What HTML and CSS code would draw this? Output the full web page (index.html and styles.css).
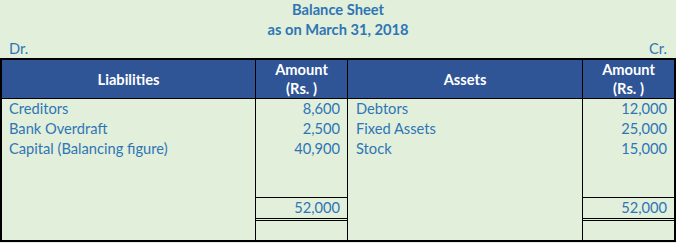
FILE: index.html
```html
<!DOCTYPE html>
<html lang="en">
<head>
<meta charset="utf-8">
<title>Balance Sheet</title>
<link rel="stylesheet" href="styles.css">
</head>
<body>
<div class="page">
  <div class="title">Balance Sheet</div>
  <div class="title">as on March 31, 2018</div>
  <div class="side-row"><span>Dr.</span><span>Cr.</span></div>
  <div class="sheet">
    <div class="hcell">Liabilities</div>
    <div class="hcell">Amount<br>(Rs. )</div>
    <div class="hcell">Assets</div>
    <div class="hcell last">Amount<br>(Rs. )</div>

    <div class="desc">
      <div class="line">Creditors</div>
      <div class="line">Bank Overdraft</div>
      <div class="line">Capital (Balancing figure)</div>
    </div>
    <div class="amt">
      <div class="entries">
        <div class="line">8,600</div>
        <div class="line">2,500</div>
        <div class="line">40,900</div>
      </div>
      <div class="total line">52,000</div>
      <div class="tail"></div>
    </div>
    <div class="desc assets">
      <div class="line">Debtors</div>
      <div class="line">Fixed Assets</div>
      <div class="line">Stock</div>
    </div>
    <div class="amt last">
      <div class="entries">
        <div class="line">12,000</div>
        <div class="line">25,000</div>
        <div class="line">15,000</div>
      </div>
      <div class="total line">52,000</div>
      <div class="tail"></div>
    </div>
  </div>
</div>
</body>
</html>
```

FILE: styles.css
```css
html, body {
  margin: 0;
  padding: 0;
  background: #e2efda;
}

body {
  font-family: Lato, "Open Sans", "Liberation Sans", sans-serif;
  font-size: 14.67px;
  color: #2e75b6;
  width: 676px;
  height: 243px;
  overflow: hidden;
}

.page {
  display: flex;
  flex-direction: column;
}

.title {
  height: 20px;
  line-height: 20px;
  text-align: center;
  font-weight: bold;
}

.side-row {
  height: 18px;
  line-height: 18px;
  display: flex;
  justify-content: space-between;
  padding: 0 9px 0 9px;
}

.sheet {
  display: grid;
  grid-template-columns: 254px 92px 235px 91px;
  grid-template-rows: 39px 141px;
  border: 2px solid #000;
  width: 676px;
  box-sizing: border-box;
}

.hcell {
  background: #2f5597;
  color: #fff;
  font-weight: bold;
  display: flex;
  align-items: center;
  justify-content: center;
  text-align: center;
  line-height: 19px;
  border-right: 1px solid #000;
  border-bottom: 1px solid #000;
}

.hcell.last,
.amt.last {
  border-right: none;
}

.line {
  height: 20px;
  line-height: 20px;
  white-space: nowrap;
}

.desc {
  border-right: 1px solid #000;
  padding-left: 7px;
}

.desc.assets {
  padding-left: 8px;
}

.amt {
  display: flex;
  flex-direction: column;
  border-right: 1px solid #000;
  text-align: right;
}

.amt .line {
  padding-right: 7px;
}

.entries {
  flex: 1;
}

.total {
  border-top: 1px solid #000;
  border-bottom: 3px double #000;
}

.tail {
  height: 19px;
}
```
